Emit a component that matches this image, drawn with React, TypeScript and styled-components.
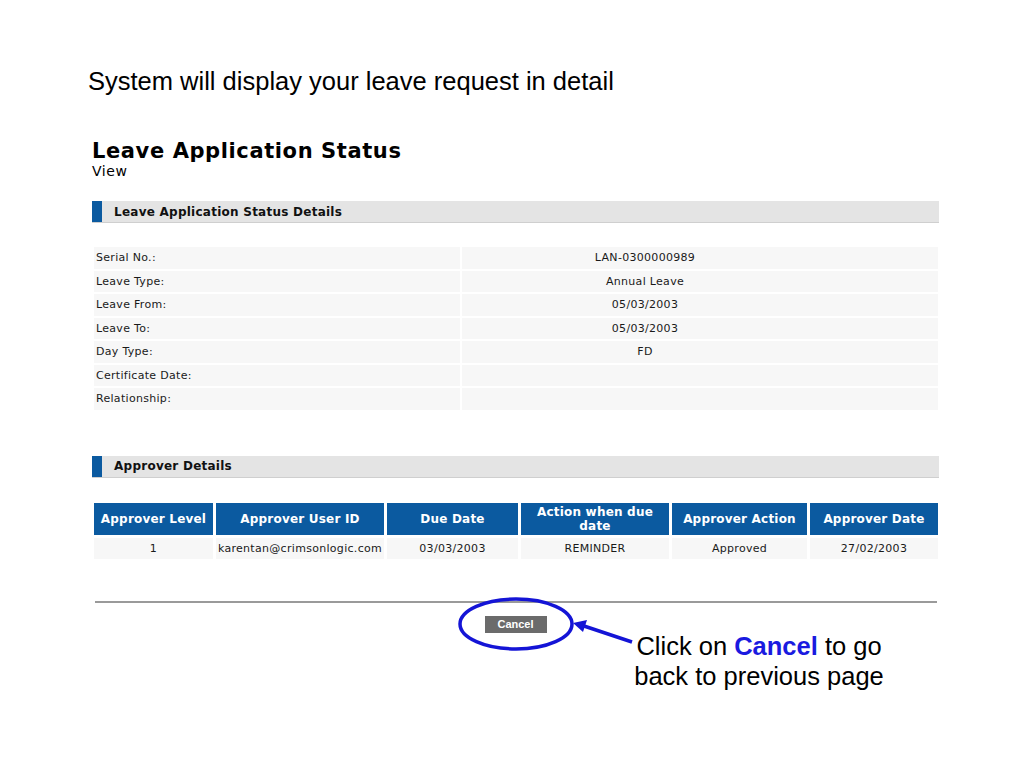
import { Fragment } from 'react';
import styled, { createGlobalStyle } from 'styled-components';

const GlobalStyle = createGlobalStyle`
    html, body {
        margin: 0;
        padding: 0;
        background: #ffffff;
    }
`;

const Page = styled.div`
    width: 1024px;
    min-height: 768px;
    padding-top: 66px;
    box-sizing: border-box;
    font-family: 'DejaVu Sans', Verdana, sans-serif;
    color: #1a1a1a;
`;

const Caption = styled.p`
    margin: 0 0 0 88px;
    font-family: 'Liberation Sans', Arial, sans-serif;
    font-size: 25.5px;
    line-height: 30px;
    color: #000;
`;

const Content = styled.div`
    margin: 43px 0 0 92px;
    width: 847px;
`;

const Title = styled.h1`
    margin: 0;
    font-size: 21px;
    line-height: 24px;
    font-weight: bold;
    letter-spacing: 0.6px;
    color: #000;
`;

const SubTitle = styled.div`
    font-size: 14px;
    line-height: 16px;
    letter-spacing: 0.6px;
    color: #000;
`;

const SectionBar = styled.div<{ $top: number }>`
    margin-top: ${({ $top }) => $top}px;
    display: flex;
    align-items: center;
    height: 21px;
    background: #e4e4e4;
    border-bottom: 1px solid #cfcfcf;
    font-size: 12px;
    font-weight: bold;
    letter-spacing: 0.25px;
    color: #111;

    &::before {
        content: '';
        width: 10px;
        height: 21px;
        margin-right: 12px;
        background: #0b5aa0;
    }
`;

const DetailGrid = styled.div`
    margin: 24px 1px 0 2px;
    display: grid;
    grid-template-columns: 366px 1fr;
    column-gap: 2px;
    row-gap: 2px;
    font-size: 11px;
`;

const DetailCell = styled.div<{ $value?: boolean }>`
    height: 21.5px;
    display: flex;
    align-items: center;
    justify-content: ${({ $value }) => ($value ? 'center' : 'flex-start')};
    padding: ${({ $value }) => ($value ? '0 110px 0 0' : '0 0 0 2px')};
    background: #f7f7f7;
    letter-spacing: 0.3px;
`;

const ApproverGrid = styled.div`
    margin: 25px 1px 0 2px;
    display: grid;
    grid-template-columns: 119px 168px 131px 148px 135px 1fr;
    column-gap: 3px;
    row-gap: 3px;
`;

const HeadCell = styled.div`
    height: 32px;
    display: flex;
    align-items: center;
    justify-content: center;
    text-align: center;
    background: #0b5aa0;
    color: #fff;
    font-size: 12px;
    font-weight: bold;
    line-height: 14px;
    letter-spacing: 0.2px;
    padding: 0 4px;
`;

const DataCell = styled.div`
    height: 21px;
    display: flex;
    align-items: center;
    justify-content: center;
    background: #f7f7f7;
    font-size: 11px;
    letter-spacing: 0.3px;
`;

const Footer = styled.div`
    position: relative;
    margin-top: 42px;
    height: 100px;
`;

const Rule = styled.div`
    margin-left: 3px;
    width: 842px;
    height: 2px;
    background: #9a9a9a;
`;

const ButtonRow = styled.div`
    display: flex;
    justify-content: center;
    padding-top: 13px;
`;

const CancelButton = styled.button`
    width: 62px;
    height: 17px;
    padding: 0;
    border: none;
    background: #6b6b6b;
    color: #fff;
    font-family: 'Liberation Sans', Arial, sans-serif;
    font-size: 11px;
    font-weight: bold;
`;

const Annotation = styled.svg`
    position: absolute;
    left: 0;
    top: 0;
    overflow: visible;
`;

const Callout = styled.div`
    position: absolute;
    left: 517px;
    top: 30px;
    width: 300px;
    text-align: center;
    font-family: 'Liberation Sans', Arial, sans-serif;
    font-size: 25.5px;
    line-height: 30px;
    color: #000;

    strong {
        color: #1a1ae0;
    }
`;

const details: [string, string][] = [
    ['Serial No.:', 'LAN-0300000989'],
    ['Leave Type:', 'Annual Leave'],
    ['Leave From:', '05/03/2003'],
    ['Leave To:', '05/03/2003'],
    ['Day Type:', 'FD'],
    ['Certificate Date:', ''],
    ['Relationship:', ''],
];

const heads = [
    'Approver Level',
    'Approver User ID',
    'Due Date',
    'Action when due date',
    'Approver Action',
    'Approver Date',
];

const approverRow = [
    '1',
    'karentan@crimsonlogic.com',
    '03/03/2003',
    'REMINDER',
    'Approved',
    '27/02/2003',
];

export default function App() {
    return (
        <>
            <GlobalStyle />
            <Page>
                <Caption>System will display your leave request in detail</Caption>

                <Content>
                    <Title>Leave Application Status</Title>
                    <SubTitle>View</SubTitle>

                    <SectionBar $top={22}>Leave Application Status Details</SectionBar>
                    <DetailGrid>
                        {details.map(([label, value]) => (
                            <Fragment key={label}>
                                <DetailCell>{label}</DetailCell>
                                <DetailCell $value>{value}</DetailCell>
                            </Fragment>
                        ))}
                    </DetailGrid>

                    <SectionBar $top={46}>Approver Details</SectionBar>
                    <ApproverGrid>
                        {heads.map((h) => (
                            <HeadCell key={h}>{h}</HeadCell>
                        ))}
                        {approverRow.map((v, i) => (
                            <DataCell key={i}>{v}</DataCell>
                        ))}
                    </ApproverGrid>

                    <Footer>
                        <Rule />
                        <ButtonRow>
                            <CancelButton>Cancel</CancelButton>
                        </ButtonRow>

                        {/* blue annotation: ring round the button and arrow */}
                        <Annotation width="847" height="100" viewBox="0 0 847 100">
                            <ellipse
                                cx="424"
                                cy="23"
                                rx="56"
                                ry="25"
                                fill="none"
                                stroke="#1414d6"
                                strokeWidth="3.5"
                            />
                            <line
                                x1="540"
                                y1="41"
                                x2="492"
                                y2="25"
                                stroke="#1414d6"
                                strokeWidth="3.5"
                            />
                            <polygon points="481,22 495,19 491,31" fill="#1414d6" />
                        </Annotation>
                        <Callout>
                            Click on <strong>Cancel</strong> to go
                            <br />
                            back to previous page
                        </Callout>
                    </Footer>
                </Content>
            </Page>
        </>
    );
}
